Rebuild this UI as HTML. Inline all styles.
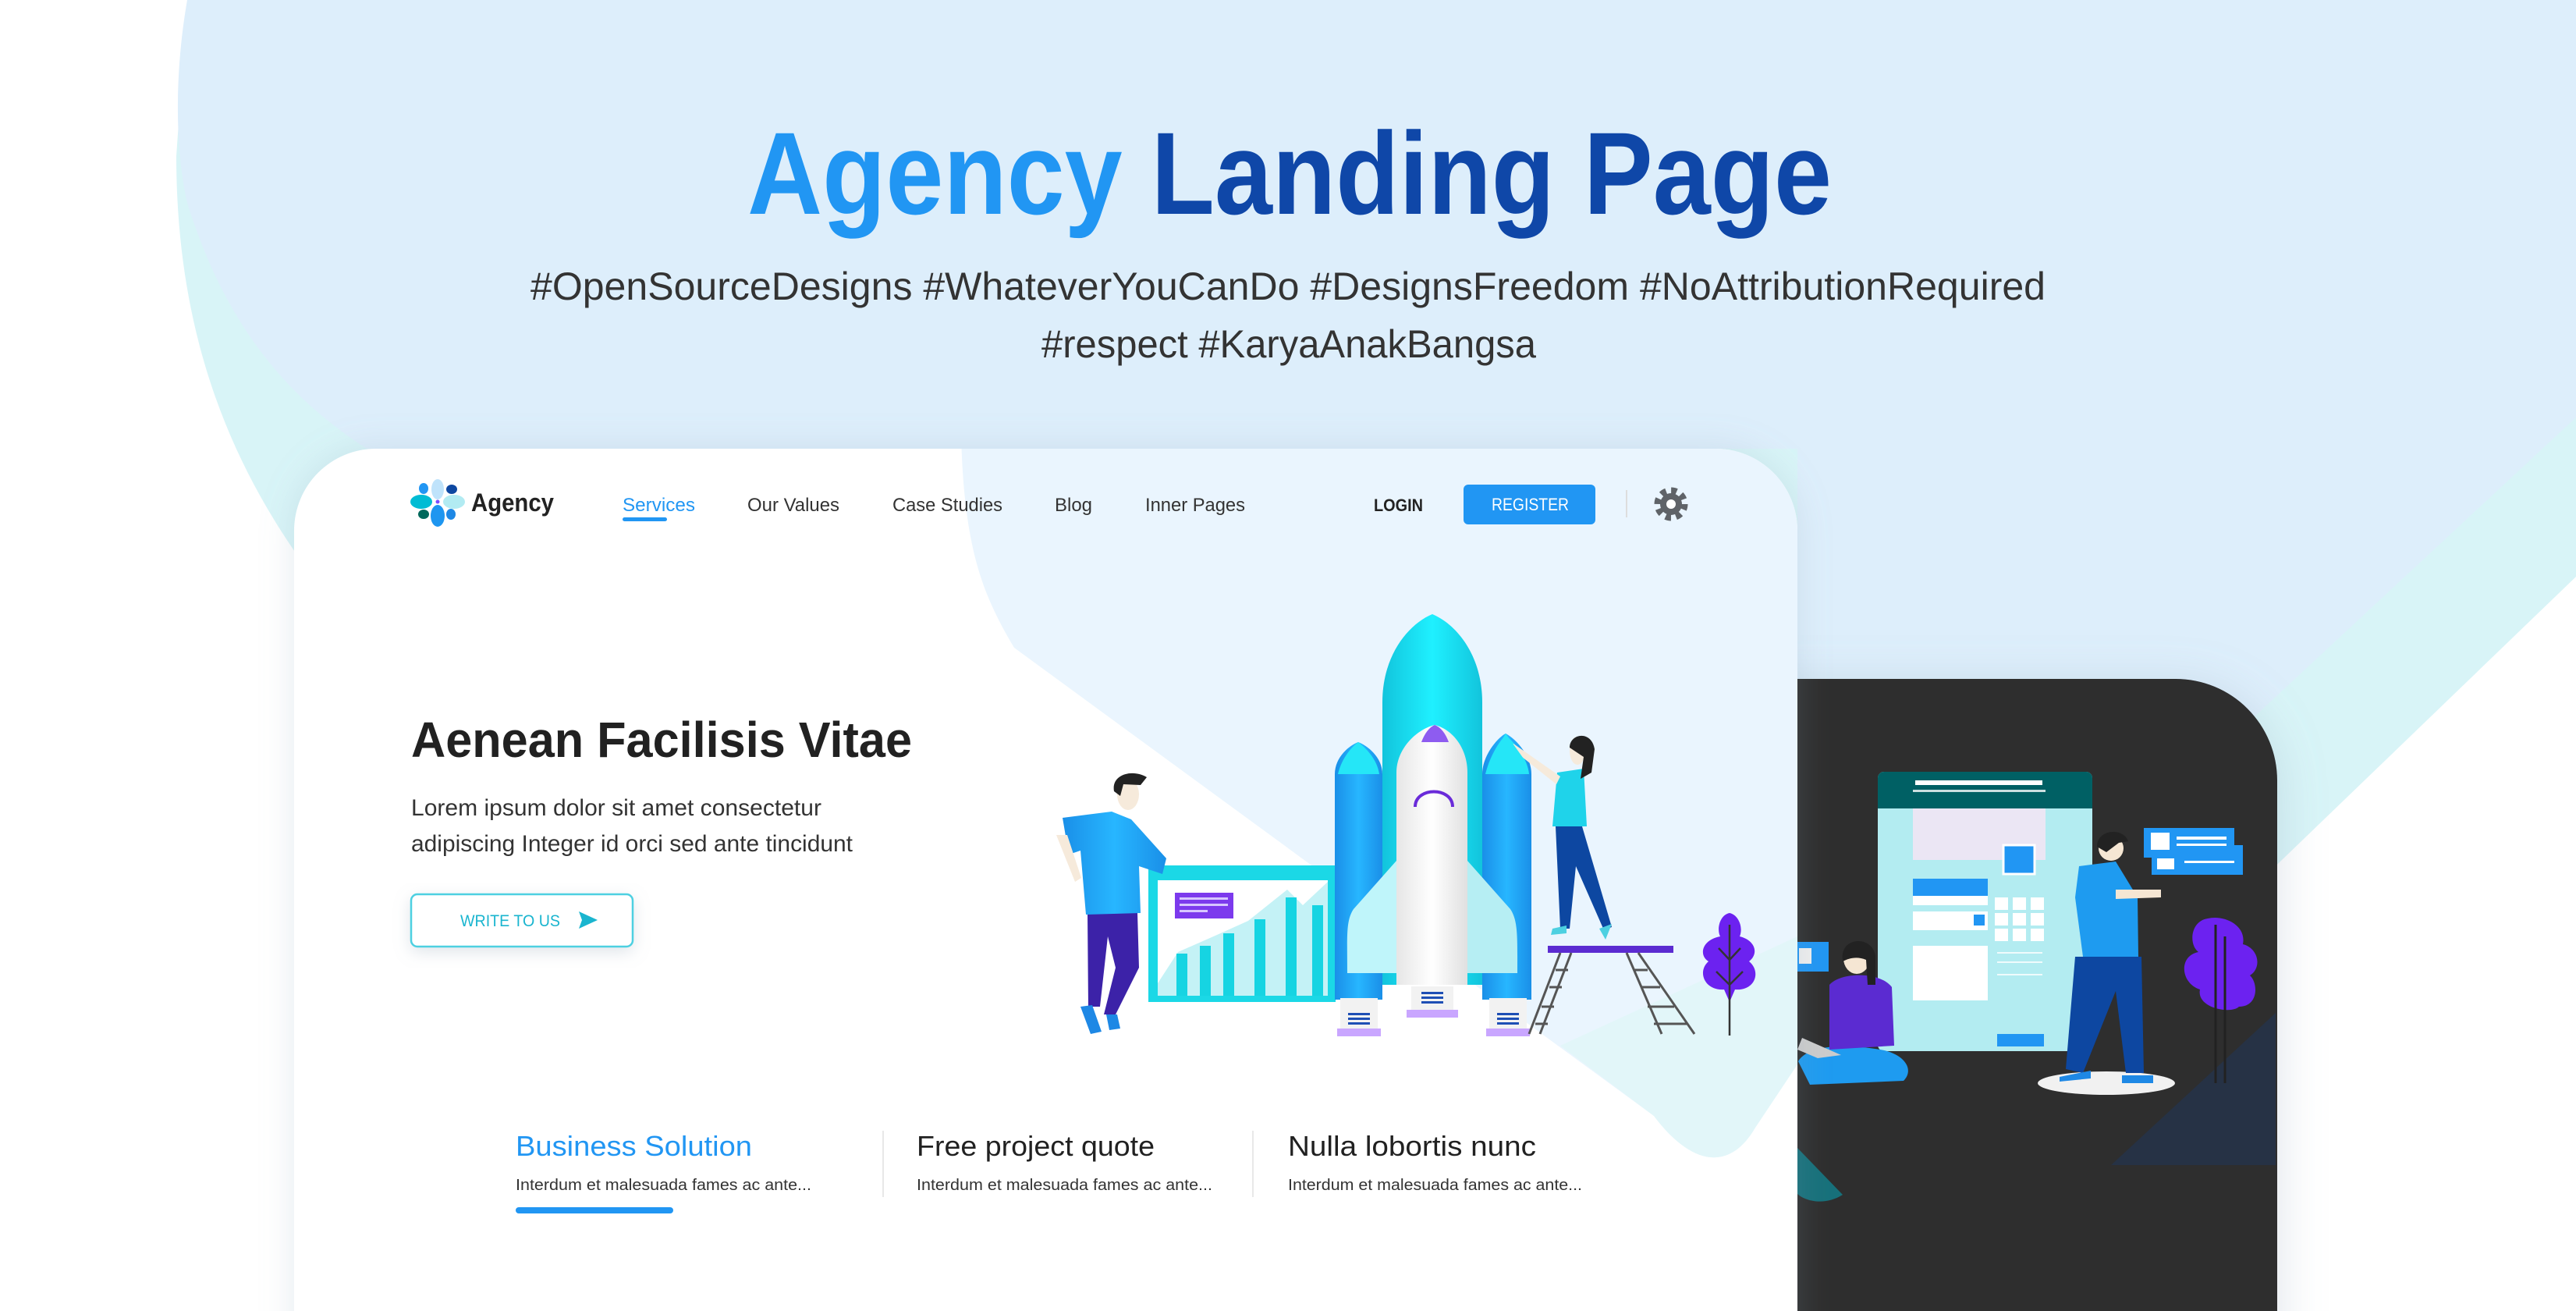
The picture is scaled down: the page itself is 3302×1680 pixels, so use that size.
<!DOCTYPE html>
<html><head><meta charset="utf-8">
<style>
html,body{margin:0;padding:0;background:#fff;}
body{width:3302px;height:1680px;overflow:hidden;position:relative;font-family:"Liberation Sans",Arial,sans-serif;}
svg{position:absolute;left:0;top:0;}
</style></head>
<body>
<svg width="3302" height="1680" viewBox="0 0 3302 1680" xmlns="http://www.w3.org/2000/svg" font-family="Liberation Sans, Arial, sans-serif">
<defs>
  <filter id="sh" x="-10%" y="-10%" width="120%" height="130%">
    <feDropShadow dx="0" dy="10" stdDeviation="30" flood-color="#8aa0b5" flood-opacity="0.3"/>
  </filter>
  <filter id="shm" x="-10%" y="-10%" width="120%" height="130%">
    <feDropShadow dx="0" dy="0" stdDeviation="22" flood-color="#8aa0b5" flood-opacity="0.22"/>
  </filter>
  <filter id="sh2" x="-20%" y="-20%" width="140%" height="160%">
    <feDropShadow dx="0" dy="6" stdDeviation="10" flood-color="#9ab" flood-opacity="0.3"/>
  </filter>
  <clipPath id="mc"><rect x="377" y="575" width="1927" height="1300" rx="105"/></clipPath>
  <clipPath id="dc"><rect x="2100" y="870" width="819" height="1000" rx="130"/></clipPath>
  <linearGradient id="rk" x1="0" x2="1"><stop offset="0" stop-color="#12c4dc"/><stop offset=".5" stop-color="#1ff0ff"/><stop offset="1" stop-color="#12c4dc"/></linearGradient>
  <linearGradient id="bs" x1="0" x2="1"><stop offset="0" stop-color="#1a8fe8"/><stop offset=".5" stop-color="#27b6ff"/><stop offset="1" stop-color="#1a8fe8"/></linearGradient>
  <linearGradient id="wh" x1="0" x2="1"><stop offset="0" stop-color="#e6e6e6"/><stop offset=".5" stop-color="#ffffff"/><stop offset="1" stop-color="#e0e0e0"/></linearGradient>
</defs>

<!-- background blobs -->
<path d="M226,200 C226,420 290,580 380,710 L2304,1700 L3302,739 L3302,0 L240,0 Z" fill="#d8f4f7"/>
<path d="M240,0 C226,80 222,180 240,260 C290,420 370,510 470,575 L2304,575 L2304,1463 L3302,535 L3302,0 Z" fill="#ddeefb"/>

<!-- dark card -->
<rect x="2100" y="870" width="819" height="1000" rx="130" fill="#2e2e2e" filter="url(#sh)"/>
<g clip-path="url(#dc)">
  <polygon points="2706,1493 2917,1298 2917,1493" fill="#263245"/>
  <path d="M2304,1471 L2362,1531 C2340,1545 2315,1540 2304,1530 Z" fill="#17707a"/>
  <rect x="2407" y="989" width="275" height="358" rx="8" fill="#b3ecf1"/>
  <path d="M2407,997 a8,8 0 0 1 8,-8 h259 a8,8 0 0 1 8,8 v39 h-275 Z" fill="#006064"/>
  <rect x="2455" y="1000" width="163" height="6" fill="#fff"/>
  <rect x="2452" y="1012" width="170" height="3" fill="#fff" opacity=".8"/>
  <rect x="2452" y="1036" width="170" height="66" fill="#ebe6f4"/>
  <rect x="2568" y="1083" width="40" height="37" fill="#2196f3" stroke="#fff" stroke-width="3"/>
  <rect x="2452" y="1126" width="96" height="22" fill="#2196f3"/>
  <rect x="2452" y="1148" width="96" height="12" fill="#fff"/>
  <rect x="2452" y="1168" width="96" height="24" fill="#fff"/>
  <rect x="2530" y="1172" width="14" height="14" fill="#2196f3"/>
  <g fill="#fff"><rect x="2557" y="1150" width="17" height="16"/><rect x="2580" y="1150" width="17" height="16"/><rect x="2603" y="1150" width="17" height="16"/>
  <rect x="2557" y="1170" width="17" height="16"/><rect x="2580" y="1170" width="17" height="16"/><rect x="2603" y="1170" width="17" height="16"/>
  <rect x="2557" y="1190" width="17" height="16"/><rect x="2580" y="1190" width="17" height="16"/><rect x="2603" y="1190" width="17" height="16"/></g>
  <rect x="2452" y="1212" width="96" height="70" fill="#fff"/>
  <rect x="2560" y="1325" width="60" height="16" fill="#2196f3"/>
  <g fill="#fff" opacity=".8"><rect x="2560" y="1220" width="58" height="2"/><rect x="2560" y="1232" width="58" height="2"/><rect x="2560" y="1248" width="58" height="2"/></g>
  <rect x="2748" y="1061" width="116" height="38" fill="#2196f3"/>
  <rect x="2758" y="1083" width="117" height="38" fill="#2196f3"/>
  <rect x="2757" y="1067" width="24" height="22" fill="#fff"/><rect x="2790" y="1072" width="64" height="4" fill="#fff"/><rect x="2790" y="1081" width="64" height="3" fill="#fff"/>
  <rect x="2765" y="1100" width="22" height="14" fill="#fff"/><rect x="2800" y="1103" width="64" height="3" fill="#fff"/>
  <rect x="2304" y="1207" width="40" height="38" fill="#2196f3"/><rect x="2306" y="1215" width="16" height="20" fill="#eee"/>
  <ellipse cx="2700" cy="1388" rx="88" ry="15" fill="#f1f1f1"/>
  <path d="M2660,1226 L2745,1226 L2748,1375 L2725,1375 L2712,1270 L2670,1375 L2648,1370 Z" fill="#0d47a1"/>
  <path d="M2665,1110 L2712,1104 L2740,1150 L2741,1226 L2670,1226 L2660,1150 Z" fill="#1e9bf0"/>
  <path d="M2712,1140 L2770,1140 L2770,1150 L2712,1152 Z" fill="#f5e6d3"/>
  <circle cx="2706" cy="1087" r="16" fill="#f5e6d3"/>
  <path d="M2688,1085 C2688,1062 2722,1060 2728,1078 L2716,1080 L2700,1092 Z" fill="#222"/>
  <path d="M2640,1380 l40,-8 l0,10 l-40,4 Z M2720,1378 l40,0 l0,10 l-40,0 Z" fill="#1e88e5"/>
  <path d="M2830,1177 C2808,1180 2805,1210 2818,1220 C2792,1225 2795,1260 2820,1268 C2815,1292 2860,1300 2870,1290 C2895,1290 2895,1260 2884,1250 C2900,1240 2895,1215 2875,1210 C2880,1185 2850,1172 2830,1177 Z" fill="#6c22f0"/>
  <path d="M2840,1185 V1388 M2852,1200 V1388" stroke="#222" stroke-width="3"/>
  <path d="M2305,1360 C2320,1335 2380,1340 2410,1345 C2440,1350 2455,1370 2440,1385 L2320,1390 Z" fill="#1e9bf0"/>
  <path d="M2345,1262 C2360,1245 2410,1245 2425,1265 L2428,1340 L2345,1345 Z" fill="#5b2bd1"/>
  <ellipse cx="2380" cy="1228" rx="17" ry="20" fill="#f5e6d3"/>
  <path d="M2362,1230 C2358,1200 2400,1198 2404,1225 L2404,1262 L2394,1262 L2392,1230 C2380,1225 2370,1228 2362,1232 Z" fill="#222"/>
  <path d="M2310,1330 L2360,1352 L2330,1356 L2304,1345 Z" fill="#ccc"/>
</g>

<!-- main card -->
<rect x="377" y="575" width="1927" height="1300" rx="105" fill="#fff" filter="url(#shm)"/>
<g clip-path="url(#mc)">
  <path d="M1232,560 C1236,700 1258,760 1300,830 L2120,1430 C2165,1490 2215,1505 2250,1445 L2304,1364 L2304,560 Z" fill="#eaf5fe"/>
  <path d="M2000,1340 L2120,1430 C2165,1490 2215,1505 2250,1445 L2304,1364 L2304,1200 Z" fill="#e2f6f9"/>
  <rect x="1472" y="1109" width="240" height="175" fill="#1bd8e6"/>
  <rect x="1484" y="1128" width="218" height="148" fill="#fff"/>
  <path d="M1484,1260 L1510,1220 L1560,1198 L1600,1180 L1650,1140 L1670,1160 L1702,1130 L1702,1276 L1484,1276 Z" fill="#c4f2f6"/>
  <g fill="#16d4e2"><rect x="1508" y="1222" width="14" height="54"/><rect x="1538" y="1212" width="14" height="64"/><rect x="1568" y="1196" width="14" height="80"/><rect x="1608" y="1178" width="14" height="98"/><rect x="1648" y="1150" width="14" height="126"/><rect x="1682" y="1160" width="14" height="116"/></g>
  <rect x="1506" y="1144" width="75" height="33" fill="#7c3aed"/>
  <g fill="#d7c6ff"><rect x="1512" y="1150" width="62" height="3"/><rect x="1512" y="1158" width="62" height="3"/><rect x="1512" y="1166" width="36" height="3"/></g>
  <path d="M1711,992 C1711,970 1730,955 1741,951 C1752,955 1772,970 1772,992 L1772,1281 L1711,1281 Z" fill="url(#bs)"/>
  <path d="M1715,992 C1720,970 1735,955 1741,951 C1750,958 1765,972 1768,992 Z" fill="#25e6f7"/>
  <path d="M1900,992 C1900,968 1920,945 1930,940 C1945,948 1963,970 1963,992 L1963,1281 L1900,1281 Z" fill="url(#bs)"/>
  <path d="M1904,992 C1910,968 1922,950 1930,942 C1942,952 1958,972 1960,992 Z" fill="#25e6f7"/>
  <path d="M1772,1262 L1772,900 C1772,840 1805,800 1836,787 C1867,800 1900,840 1900,900 L1900,1262 Z" fill="url(#rk)"/>
  <path d="M1790,1103 L1735,1165 C1725,1180 1727,1200 1727,1247 L1790,1247 Z" fill="#bff5fa"/>
  <path d="M1881,1103 L1936,1165 C1946,1180 1945,1200 1945,1247 L1881,1247 Z" fill="#b6eef3"/>
  <path d="M1790,1262 L1790,990 C1790,960 1815,935 1839,929 C1863,935 1881,960 1881,990 L1881,1262 Z" fill="url(#wh)"/>
  <path d="M1822,951 C1826,940 1832,932 1839,929 C1847,932 1853,940 1857,951 Z" fill="#8e5cf0"/>
  <path d="M1814,1034 C1814,1008 1862,1008 1862,1034" fill="none" stroke="#6a2bd9" stroke-width="4"/>
  <g>
    <rect x="1718" y="1279" width="48" height="39" fill="#f2f2f2"/><rect x="1714" y="1318" width="56" height="10" fill="#c9a6ff"/>
    <rect x="1809" y="1264" width="54" height="30" fill="#f2f2f2"/><rect x="1803" y="1294" width="66" height="10" fill="#c9a6ff"/>
    <rect x="1909" y="1279" width="48" height="39" fill="#f2f2f2"/><rect x="1905" y="1318" width="56" height="10" fill="#c9a6ff"/>
    <g fill="#1e4fb5"><rect x="1728" y="1298" width="28" height="3"/><rect x="1728" y="1304" width="28" height="3"/><rect x="1728" y="1310" width="28" height="3"/>
    <rect x="1822" y="1271" width="28" height="3"/><rect x="1822" y="1277" width="28" height="3"/><rect x="1822" y="1283" width="28" height="3"/>
    <rect x="1919" y="1298" width="28" height="3"/><rect x="1919" y="1304" width="28" height="3"/><rect x="1919" y="1310" width="28" height="3"/></g>
  </g>
  <path d="M1394,1170 L1458,1170 L1460,1240 L1430,1300 L1415,1300 L1430,1240 L1420,1200 L1410,1290 L1395,1290 Z" fill="#3c22a8"/>
  <path d="M1362,1048 L1425,1040 L1450,1050 L1495,1100 L1490,1120 L1460,1110 L1462,1170 L1392,1172 L1385,1090 L1370,1095 Z" fill="url(#bs)"/>
  <path d="M1354,1070 L1378,1130 L1386,1125 L1368,1070 Z" fill="#f6eadb"/>
  <ellipse cx="1446" cy="1018" rx="14" ry="20" fill="#f6eadb"/>
  <path d="M1428,1014 C1424,992 1452,985 1470,996 L1462,1006 L1440,1005 L1436,1020 Z" fill="#222"/>
  <path d="M1385,1290 L1400,1288 L1412,1322 L1398,1325 Z M1418,1300 L1432,1300 L1436,1318 L1422,1320 Z" fill="#1e88e5"/>
  <path d="M1994,1059 L2028,1059 L2066,1188 L2056,1192 L2020,1110 L2012,1190 L2000,1190 Z" fill="#0d47a1"/>
  <path d="M1996,990 L2030,985 L2034,1059 L1990,1059 Z" fill="#1fd3ea"/>
  <path d="M2000,995 L1940,953 L1936,958 L1995,1005 Z" fill="#f6eadb"/>
  <path d="M1910,975 L1930,940 L1955,975 Z" fill="#25e6f7"/>
  <ellipse cx="2022" cy="962" rx="10" ry="18" fill="#f6eadb"/>
  <path d="M2012,958 C2012,940 2040,935 2044,960 L2040,990 L2026,998 L2030,970 Z" fill="#222"/>
  <path d="M1990,1190 l18,-4 l0,10 l-20,2 Z M2050,1190 l16,-6 l-8,20 Z" fill="#4dd0e1"/>
  <rect x="1984" y="1212" width="161" height="9" fill="#5b2bd1"/>
  <g stroke="#555" stroke-width="3"><line x1="2000" y1="1221" x2="1960" y2="1325"/><line x1="2014" y1="1221" x2="1974" y2="1325"/><line x1="2085" y1="1221" x2="2130" y2="1325"/><line x1="2100" y1="1221" x2="2172" y2="1325"/>
  <line x1="1994" y1="1243" x2="2010" y2="1243"/><line x1="1986" y1="1265" x2="2002" y2="1265"/><line x1="1976" y1="1290" x2="1992" y2="1290"/><line x1="1968" y1="1312" x2="1984" y2="1312"/>
  <line x1="2094" y1="1243" x2="2112" y2="1243"/><line x1="2103" y1="1265" x2="2128" y2="1265"/><line x1="2112" y1="1290" x2="2146" y2="1290"/><line x1="2120" y1="1312" x2="2162" y2="1312"/></g>
  <path d="M2217,1170 C2205,1172 2200,1190 2205,1200 C2180,1205 2178,1225 2190,1232 C2175,1245 2185,1270 2210,1268 L2217,1284 L2224,1268 C2250,1270 2258,1245 2242,1232 C2255,1222 2250,1205 2230,1200 C2235,1188 2228,1172 2217,1170 Z" fill="#6c22f0"/>
  <path d="M2217,1185 V1327 M2203,1215 L2217,1230 L2231,1215 M2200,1245 L2217,1262 L2234,1245" stroke="#333" stroke-width="2.5" fill="none"/>
</g>

<text x="958" y="274" font-size="150" font-weight="bold" textLength="1390" lengthAdjust="spacingAndGlyphs"><tspan fill="#2196f3">Agency</tspan><tspan fill="#0f47a8"> Landing Page</tspan></text>
<text x="680" y="384" font-size="50" fill="#333" textLength="1942" lengthAdjust="spacingAndGlyphs">#OpenSourceDesigns #WhateverYouCanDo #DesignsFreedom  #NoAttributionRequired</text>
<text x="1335" y="458" font-size="50" fill="#333" textLength="634" lengthAdjust="spacingAndGlyphs">#respect #KaryaAnakBangsa</text>

<g>
  <ellipse cx="561" cy="627" rx="8" ry="13" fill="#bfe3fb"/>
  <ellipse cx="561" cy="661" rx="9" ry="14" fill="#1e96f0"/>
  <ellipse cx="540" cy="643" rx="14" ry="9" fill="#00bcd4"/>
  <ellipse cx="582" cy="643" rx="14" ry="9" fill="#b2ebf2"/>
  <ellipse cx="543" cy="626" rx="6" ry="7" fill="#2196f3"/>
  <ellipse cx="579" cy="627" rx="7" ry="6" fill="#0d47a1"/>
  <ellipse cx="543" cy="659" rx="7" ry="6" fill="#00695c"/>
  <ellipse cx="578" cy="659" rx="6" ry="7" fill="#1e88e5"/>
  <circle cx="561" cy="643" r="2.5" fill="#7c4dff"/>
</g>
<text x="604" y="655" font-size="32" font-weight="bold" fill="#222" textLength="106" lengthAdjust="spacingAndGlyphs">Agency</text>
<g font-size="24" fill="#333">
  <text x="798" y="655" fill="#2196f3" textLength="93" lengthAdjust="spacingAndGlyphs">Services</text>
  <text x="958" y="655" textLength="118" lengthAdjust="spacingAndGlyphs">Our Values</text>
  <text x="1144" y="655" textLength="141" lengthAdjust="spacingAndGlyphs">Case Studies</text>
  <text x="1352" y="655" textLength="48" lengthAdjust="spacingAndGlyphs">Blog</text>
  <text x="1468" y="655" textLength="128" lengthAdjust="spacingAndGlyphs">Inner Pages</text>
  <text x="1761" y="655" font-size="22" font-weight="bold" fill="#222" textLength="63" lengthAdjust="spacingAndGlyphs">LOGIN</text>
</g>
<rect x="798" y="663" width="57" height="5" rx="2.5" fill="#2196f3"/>
<rect x="1876" y="621" width="169" height="51" rx="6" fill="#2196f3"/>
<text x="1912" y="654" font-size="22" fill="#fff" textLength="99" lengthAdjust="spacingAndGlyphs">REGISTER</text>
<rect x="2084" y="628" width="2" height="35" fill="#ddd"/>
<g transform="translate(2142,646)">
  <circle r="17" fill="none" stroke="#5f6368" stroke-width="9" stroke-dasharray="7 6.35"/>
  <circle r="14" fill="#5f6368"/>
  <circle r="6" fill="#fff"/>
</g>

<text x="527" y="970" font-size="64" font-weight="bold" fill="#212121" textLength="642" lengthAdjust="spacingAndGlyphs">Aenean Facilisis Vitae</text>
<text x="527" y="1045" font-size="30" fill="#333" textLength="526" lengthAdjust="spacingAndGlyphs">Lorem ipsum dolor sit amet consectetur</text>
<text x="527" y="1091" font-size="30" fill="#333" textLength="566" lengthAdjust="spacingAndGlyphs">adipiscing Integer id orci sed ante tincidunt</text>
<rect x="527" y="1146" width="284" height="67" rx="8" fill="#fff" stroke="#4dd0e1" stroke-width="2.5" filter="url(#sh2)"/>
<text x="590" y="1187" font-size="21" fill="#1ab5cf" textLength="128" lengthAdjust="spacingAndGlyphs">WRITE TO US</text>
<path d="M742,1168 L766,1179 L742,1190 L746,1179 Z" fill="#1ab5cf"/>

<text x="661" y="1481" font-size="36" fill="#2196f3" textLength="303" lengthAdjust="spacingAndGlyphs">Business Solution</text>
<text x="1175" y="1481" font-size="36" fill="#212121" textLength="305" lengthAdjust="spacingAndGlyphs">Free project quote</text>
<text x="1651" y="1481" font-size="36" fill="#212121" textLength="318" lengthAdjust="spacingAndGlyphs">Nulla lobortis nunc</text>
<g font-size="20" fill="#333">
  <text x="661" y="1525" textLength="379" lengthAdjust="spacingAndGlyphs">Interdum et malesuada fames ac ante...</text>
  <text x="1175" y="1525" textLength="379" lengthAdjust="spacingAndGlyphs">Interdum et malesuada fames ac ante...</text>
  <text x="1651" y="1525" textLength="377" lengthAdjust="spacingAndGlyphs">Interdum et malesuada fames ac ante...</text>
</g>
<rect x="661" y="1547" width="202" height="8" rx="4" fill="#2196f3"/>
<rect x="1131" y="1449" width="2" height="85" fill="#e8e8e8"/>
<rect x="1605" y="1449" width="2" height="85" fill="#e8e8e8"/>
</svg>
</body></html>
